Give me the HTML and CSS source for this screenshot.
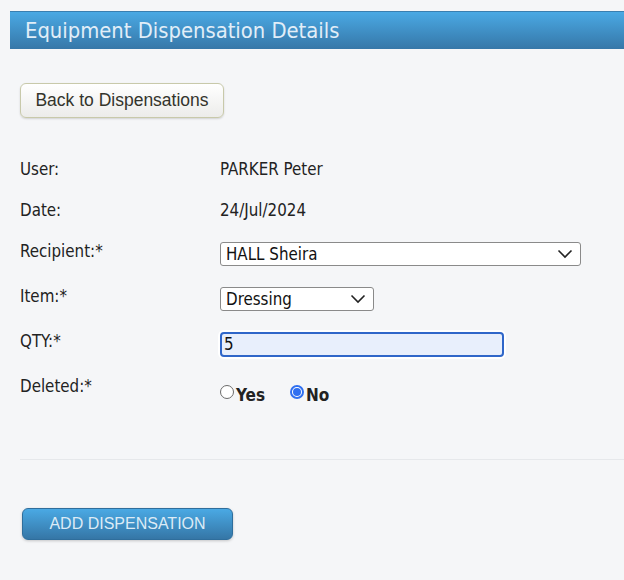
FILE: index.html
```html
<!DOCTYPE html>
<html>
<head>
<meta charset="utf-8">
<link rel="stylesheet" href="styles.css">
</head>
<body>
<div class="page">
  <div class="header">Equipment Dispensation Details</div>
  <div class="content">
    <button class="back-btn">Back to Dispensations</button>
    <div class="form">
      <div class="row row-short"><div class="label">User:</div><div class="value">PARKER Peter</div></div>
      <div class="row row-short"><div class="label">Date:</div><div class="value">24/Jul/2024</div></div>
      <div class="row"><div class="label">Recipient:*</div><div class="value">
        <div class="select select-wide"><span>HALL Sheira</span><svg width="16" height="10" viewBox="0 0 16 10"><path d="M1.5 1.5 L8 8 L14.5 1.5" fill="none" stroke="#222" stroke-width="1.6"/></svg></div>
      </div></div>
      <div class="row"><div class="label">Item:*</div><div class="value">
        <div class="select select-narrow"><span>Dressing</span><svg width="16" height="10" viewBox="0 0 16 10"><path d="M1.5 1.5 L8 8 L14.5 1.5" fill="none" stroke="#222" stroke-width="1.6"/></svg></div>
      </div></div>
      <div class="row"><div class="label">QTY:*</div><div class="value">
        <div class="input-focus">5</div>
      </div></div>
      <div class="row"><div class="label">Deleted:*</div><div class="value radios">
        <span class="radio-item"><span class="radio"></span><b>Yes</b></span>
        <span class="radio-item"><span class="radio checked"></span><b>No</b></span>
      </div></div>
    </div>
    <div class="sep"></div>
    <button class="add-btn">ADD DISPENSATION</button>
  </div>
</div>
</body>
</html>
```
FILE: styles.css
```css
html, body {
  margin: 0;
  padding: 0;
  background: #f5f6f8;
}
body {
  font-family: "DejaVu Sans Condensed", "DejaVu Sans", sans-serif;
  font-size: 16.8px;
  color: #222;
  width: 624px;
  height: 580px;
  overflow: hidden;
}
.page {
  padding-top: 11px;
}
.header {
  margin-left: 10px;
  height: 38px;
  box-sizing: border-box;
  padding-left: 15px;
  line-height: 37px;
  background: linear-gradient(#4aa9e4, #3677a8);
  border-top: 1px solid #3a7fb0;
  color: #e1eef8;
  font-size: 21.8px;
}
.content {
  padding: 34px 0 0 20px;
}
.back-btn {
  display: block;
  width: 204px;
  height: 35px;
  border: 1px solid #c8c9aa;
  border-radius: 6px;
  background: linear-gradient(#ffffff, #ececea);
  box-shadow: 0 1px 2px rgba(0,0,0,0.15);
  font-family: "Liberation Sans", Arial, sans-serif;
  font-size: 17.5px;
  color: #33342c;
  padding: 0;
}
.form {
  margin-top: 41px;
  display: flex;
  flex-direction: column;
}
.row {
  display: flex;
  height: 45px;
  align-items: flex-start;
}
.row-short {
  height: 41px;
}
.label {
  width: 200px;
  line-height: 20px;
}
.value {
  line-height: 20px;
}
.select {
  margin-top: 1px;
  height: 24px;
  box-sizing: border-box;
  border: 1px solid #8a8a8a;
  border-radius: 3px;
  background: #fff;
  display: flex;
  align-items: center;
  justify-content: space-between;
  padding: 0 7px 0 5px;
  color: #111;
}
.select-wide { width: 361px; }
.select-narrow { width: 154px; }
.input-focus {
  margin-top: 1px;
  width: 284px;
  height: 25px;
  box-sizing: border-box;
  border: 2px solid #2f66c9;
  border-radius: 4px;
  background: #e8effc;
  box-shadow: 0 0 0 2px #fff;
  padding-left: 2px;
  line-height: 21px;
  color: #111;
}
.radios {
  display: flex;
  gap: 25px;
}
.radio-item {
  display: flex;
  align-items: flex-start;
}
.radio-item b {
  font-weight: bold;
  font-size: 17px;
  line-height: 20px;
  margin-top: 9px;
  margin-left: 2px;
}
.radio {
  width: 14px;
  height: 14px;
  box-sizing: border-box;
  border: 1px solid #6b6b6b;
  border-radius: 50%;
  background: #fff;
  margin-top: 9px;
}
.radio.checked {
  border: 2px solid #2f6ff0;
  background: #fff;
  position: relative;
}
.radio.checked::after {
  content: "";
  position: absolute;
  left: 1px;
  top: 1px;
  width: 8px;
  height: 8px;
  border-radius: 50%;
  background: #2f6ff0;
}
.sep {
  margin-top: 38px;
  height: 1px;
  background: #e6e8eb;
}
.add-btn {
  display: block;
  margin-top: 48px;
  margin-left: 2px;
  width: 211px;
  height: 32px;
  border: 1px solid #2f6e9c;
  border-radius: 6px;
  background: linear-gradient(#4aa9e4, #3576a6);
  box-shadow: 0 1px 3px rgba(0,0,0,0.2);
  color: #dcebf6;
  font-family: "Liberation Sans", Arial, sans-serif;
  font-size: 16px;
  padding: 0;
}
```
